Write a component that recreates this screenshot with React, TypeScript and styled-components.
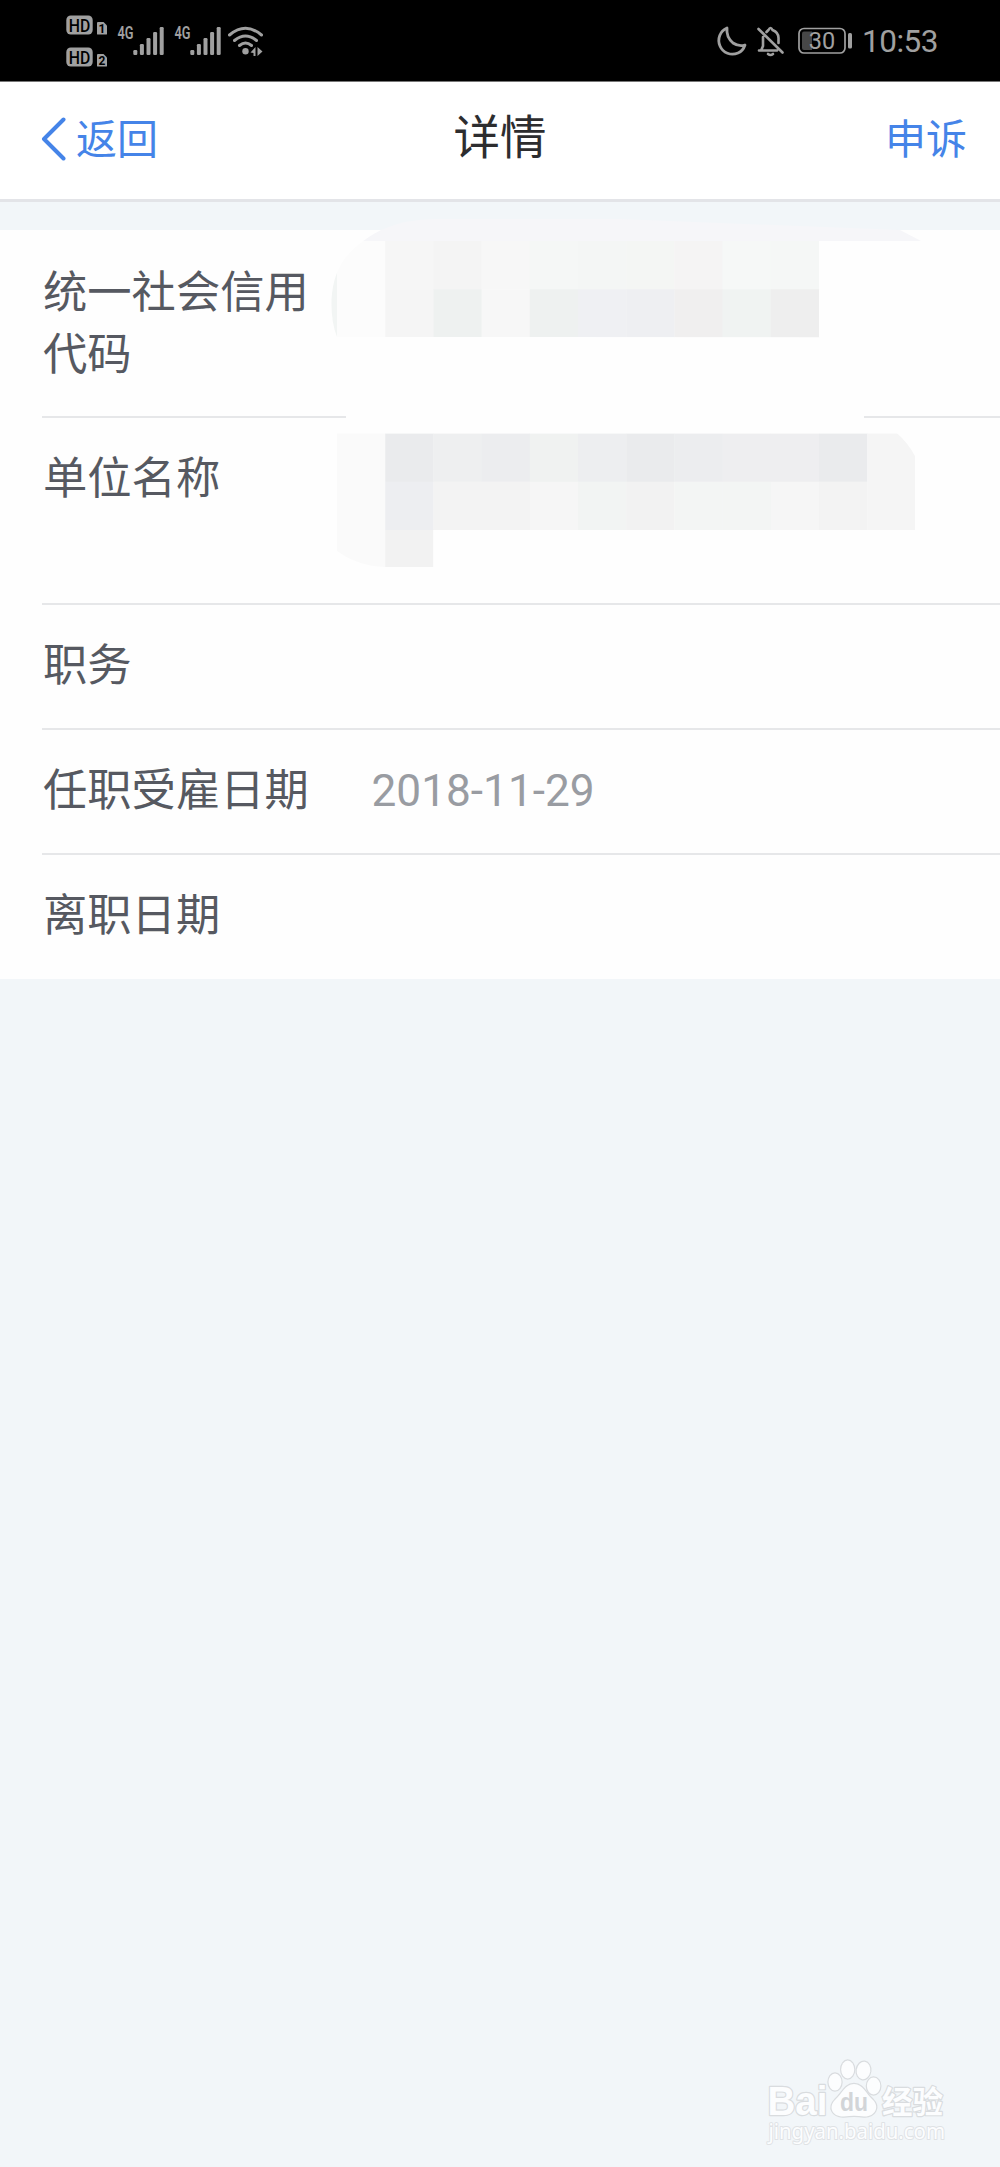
import React from "react";
import styled, { createGlobalStyle } from "styled-components";

const GlobalStyle = createGlobalStyle`
  *, *::before, *::after { box-sizing: border-box; }
  body {
    margin: 0;
    background: #f2f6f9;
    font-family: Roboto, "Noto Sans CJK SC", sans-serif;
  }
`;

const CJK = `"Noto Sans CJK SC", sans-serif`;
const ICON = "#a0a0a0";
const BLUE = "#4584e8";

const Screen = styled.main`
  position: relative;
  width: 1000px;
  height: 2167px;
  display: flex;
  flex-direction: column;
  overflow: hidden;
  background: #f2f6f9;
`;

const StatusBar = styled.header`
  flex: none;
  height: 82px;
  padding: 0 62px 0 66px;
  display: flex;
  justify-content: space-between;
  background: #000;
  border-bottom: 1px solid #777;
  color: ${ICON};
`;

const StatusGroup = styled.div`
  display: flex;
  align-items: center;
`;

const SimStack = styled.div`
  display: flex;
  flex-direction: column;
  gap: 12px;
  margin-right: 10px;
`;

const SimLine = styled.div`
  display: flex;
  align-items: flex-end;
  gap: 4px;
  height: 20px;
`;

const Icon = styled.svg<{ $gap?: number }>`
  display: block;
  flex: none;
  overflow: visible;
  margin-right: ${(p) => p.$gap ?? 0}px;
`;

const Clock = styled.time`
  font: 400 31.5px/40px Roboto, sans-serif;
  letter-spacing: -0.5px;
  margin-top: 3px;
`;

const NavBar = styled.nav`
  flex: none;
  height: 120px;
  padding: 0 33px 10px 41px;
  display: grid;
  grid-template-columns: 1fr auto 1fr;
  align-items: center;
  background: #fff;
  border-bottom: 3px solid #e3e4e8;
  font-family: ${CJK};
`;

const NavButton = styled.button<{ $end?: boolean }>`
  display: flex;
  align-items: center;
  justify-self: ${(p) => (p.$end ? "end" : "start")};
  gap: 10px;
  padding: 0;
  border: 0;
  background: none;
  color: ${BLUE};
  font: 400 41px/60px ${CJK};
`;

const Chevron = styled.svg`
  display: block;
  margin-top: 6px;
`;

const Title = styled.h1`
  margin: 0 8px 3px 0;
  font-size: 46.5px;
  line-height: 60px;
  font-weight: 400;
  color: #2d2d2f;
`;

const Card = styled.section`
  flex: none;
  position: relative;
  margin-top: 28px;
  height: 749px;
  padding-left: 42px;
  background: #fefefe;
`;

const Row = styled.div<{ $height: number }>`
  height: ${(p) => p.$height}px;
  padding: 27px 0 0 1px;
  display: flex;
  border-bottom: 2px solid #e6e7e9;

  &:first-of-type { padding-top: 29px; }
  &:last-of-type { border-bottom: 0; }
`;

const Label = styled.span`
  width: 290px;
  flex: none;
  font: 400 44.3px/61.5px ${CJK};
  color: #565961;
`;

const Value = styled.span`
  margin: 4px 0 0 38.5px;
  font: 400 44.2px/61.5px Roboto, sans-serif;
  color: #999ca2;
`;

const Mosaic = styled.svg`
  position: absolute;
  left: 320px;
  top: -20px;
  pointer-events: none;
`;

const Watermark = styled.svg`
  position: absolute;
  right: 48px;
  bottom: 14px;
`;

const SimBadge = ({ slot }: { slot: number }) => (
  <SimLine>
    <Icon width="27" height="20" viewBox="0 0 27 20">
      <rect x="0.3" y="0.5" width="26.4" height="19" rx="4.5" fill={ICON} />
      <text x="2.800" y="16.6" textLength="21.500" lengthAdjust="spacingAndGlyphs" fontFamily="Roboto, sans-serif" fontWeight="500" fontSize="18.5" fill="#000">HD</text>
    </Icon>
    <Icon width="10" height="14" viewBox="0 0 10 14">
      <path d="M0 1.5Q0 1 1 1H6.5L10 4.5V13Q10 13.6 9 13.6H1Q0 13.6 0 13Z" fill={ICON} />
      <text x="5" y="12" textAnchor="middle" fontFamily="Roboto, sans-serif" fontWeight="700" fontSize="12" fill="#000">{slot}</text>
    </Icon>
  </SimLine>
);

const Signal = ({ gap }: { gap: number }) => (
  <Icon $gap={gap} width="47" height="30" viewBox="0 0 47 30">
    <text x="0.5" y="13" textLength="16" lengthAdjust="spacingAndGlyphs" fontFamily="Roboto, sans-serif" fontWeight="600" fontSize="17.5" fill={ICON}>4G</text>
    {[5, 11, 17, 23, 28].map((h, i) => (
      <rect key={h} x={16.3 + i * 6.6} y={29 - h} width="4" height={h} rx="1.2" fill={ICON} />
    ))}
  </Icon>
);

const CELL = 48.2;
const codeCells = [
  ["#fcfcfc", "#f6f6f6", "#f4f4f4", "#f7f7f7", "#f5f7f6", "#f4f6f5", "#f4f6f4", "#f5f4f4", "#f6f8f7", "#f5f7f6", "#fefefe", "#fefefe"],
  ["#fcfcfc", "#f5f5f5", "#eef1f0", "#f7f7f7", "#eef1f0", "#eff0f3", "#eeeff2", "#f0efef", "#f0f3f2", "#eeeeee", "#fefefe", "#fefefe"],
];
const nameCells = [
  ["#fafafa", "#eaebed", "#eeeff0", "#ecedef", "#f0f2f1", "#edeef0", "#eaebed", "#ecedef", "#eeeef0", "#eeeef0", "#eaebed", "#f5f5f5"],
  ["#fafafa", "#edeef1", "#f3f3f3", "#f3f3f3", "#f6f6f6", "#f2f4f3", "#f2f2f2", "#f3f5f4", "#f3f5f4", "#f6f6f6", "#f3f3f3", "#f5f5f5"],
  ["#fafafa", "#f2f2f2"],
];

const Cells = ({ rows, top }: { rows: string[][]; top: number }) => (
  <>
    {rows.map((row, r) =>
      row.map((fill, c) => (
        <rect key={`${r}-${c}`} x={337 + c * CELL} y={top + r * CELL} width={CELL + 0.3} height={CELL + 0.3} fill={fill} />
      ))
    )}
  </>
);

const Redaction = () => (
  <Mosaic width="620" height="380" viewBox="320 210 620 380">
    <clipPath id="codeClip">
      <path d="M337 337Q331 322 331.500 300C333 268 347 248 381 230Q405 219 435 219H620L900 230L921 241V337.400Z" />
    </clipPath>
    <clipPath id="nameClip">
      <path d="M337 433.300H897Q908 443 915 456V530H433.300V567H385Q358 566 337 551Z" />
    </clipPath>
    <g clipPath="url(#codeClip)">
      <rect x="337" y="219" width="584" height="22" fill="#f6f6f9" />
      <rect x="331" y="241" width="6" height="97" fill="#f2f5f4" />
      <Cells rows={codeCells} top={241} />
    </g>
    <rect x="346" y="414" width="518" height="6" fill="#fefefe" />
    <g clipPath="url(#nameClip)">
      <Cells rows={nameCells} top={433.5} />
    </g>
  </Mosaic>
);

const BaiduMark = () => (
  <Watermark width="190" height="96" viewBox="762 2057 190 96">
    <g fill="#fcfdfe" stroke="#d9dcdf" strokeWidth="2.4" strokeLinejoin="round" paintOrder="stroke">
      <text x="767.500" y="2115" textLength="60" lengthAdjust="spacingAndGlyphs" fontFamily='"Liberation Sans", sans-serif' fontWeight="700" fontSize="40">Bai</text>
      <ellipse cx="835" cy="2082" rx="6.5" ry="8.600" />
      <ellipse cx="847.700" cy="2069.500" rx="6.500" ry="9" />
      <ellipse cx="863.500" cy="2070.500" rx="6.800" ry="8.800" transform="rotate(8 863.500 2070.500)" />
      <ellipse cx="873.600" cy="2086" rx="6.700" ry="8.500" />
      <path d="M854 2084C863 2084 866 2094 873 2100C880 2107 875 2117 864 2116.500C857 2115.500 851 2115.500 844 2116.500C832 2117 828 2107 835 2100C842 2094 845 2084 854 2084Z" />
      <text x="882" y="2112.500" textLength="61" lengthAdjust="spacingAndGlyphs" fontFamily={CJK} fontWeight="700" fontSize="31">经验</text>
      <text x="768.500" y="2139" textLength="176.500" lengthAdjust="spacingAndGlyphs" fontFamily='"Noto Sans", sans-serif' fontSize="21.500" stroke="#dfe2e5" strokeWidth="2">jingyan.baidu.com</text>
    </g>
    <text x="840" y="2111" textLength="28" lengthAdjust="spacingAndGlyphs" fontFamily='"Liberation Sans", sans-serif' fontWeight="700" fontSize="25" fill="#d2d5d8">du</text>
  </Watermark>
);

const records = [
  { label: "统一社会信用代码", height: 188 },
  { label: "单位名称", height: 187 },
  { label: "职务", height: 125 },
  { label: "任职受雇日期", value: "2018-11-29", height: 125 },
  { label: "离职日期", height: 124 },
];

export default function App() {
  return (
    <>
      <GlobalStyle />
      <Screen>
        <StatusBar>
          <StatusGroup>
            <SimStack>
              <SimBadge slot={1} />
              <SimBadge slot={2} />
            </SimStack>
            <Signal gap={9.5} />
            <Signal gap={7} />
            <Icon width="36" height="30" viewBox="0 0 36 30" fill="none" stroke={ICON} strokeWidth="3">
              <path d="M1.500 9Q17.500-4.500 33.500 9M6.500 14.500Q17.500 5.500 28.500 14.500M11.500 19.500Q17.500 14.500 23.500 19.500" strokeLinecap="round" />
              <circle cx="17.500" cy="25.300" r="3.200" fill={ICON} stroke="none" />
              <path d="M27.500 21V30H25.500V27L22.500 26.500ZM29.500 21V30L34.500 25.500Z" fill={ICON} stroke="none" />
            </Icon>
          </StatusGroup>
          <StatusGroup>
            <Icon $gap={10} width="30" height="30" viewBox="0 0 30 30" fill="none" stroke={ICON} strokeWidth="2.8" strokeLinejoin="round">
              <path d="M10 2C3 5 0 13 3 20C6 27 14 30 21 27Q26 25 28 19Q22 21 16 17Q9 11 10 2Z" />
            </Icon>
            <Icon $gap={14} width="27" height="30" viewBox="0 0 27 30" fill="none" stroke={ICON} strokeWidth="2.6" strokeLinecap="round">
              <path d="M1.500 3L25.500 26.500M2 24.500H20M4.500 23.500L6 20V11M9.500 6Q11 4.500 11.500 4Q13.500 0 15.500 4Q22 6.500 21.500 13V17" />
              <path d="M11 28Q13.500 30 16 28" />
            </Icon>
            <Icon $gap={9} width="55" height="28" viewBox="0 0 55 28">
              <rect x="1" y="1.500" width="46" height="24.500" rx="5" fill="none" stroke={ICON} strokeWidth="1.700" />
              <path d="M6 4.500H14V23H6Q4 23 4 21V6.500Q4 4.500 6 4.500Z" fill="#474747" />
              <text x="24" y="21.800" textAnchor="middle" fontFamily="Roboto, sans-serif" fontSize="23.500" fill={ICON}>30</text>
              <rect x="50" y="6" width="4" height="15.500" rx="1.500" fill={ICON} />
            </Icon>
            <Clock>10:53</Clock>
          </StatusGroup>
        </StatusBar>

        <NavBar>
          <NavButton>
            <Chevron width="25" height="44" viewBox="0 0 25 44">
              <path d="M22.500 2.500L3 22L22.500 41.500" fill="none" stroke={BLUE} strokeWidth="4" strokeLinecap="round" strokeLinejoin="round" />
            </Chevron>
            返回
          </NavButton>
          <Title>详情</Title>
          <NavButton $end>申诉</NavButton>
        </NavBar>

        <Card>
          {records.map((r) => (
            <Row key={r.label} $height={r.height}>
              <Label>{r.label}</Label>
              {r.value && <Value>{r.value}</Value>}
            </Row>
          ))}
          <Redaction />
        </Card>
        <BaiduMark />
      </Screen>
    </>
  );
}
